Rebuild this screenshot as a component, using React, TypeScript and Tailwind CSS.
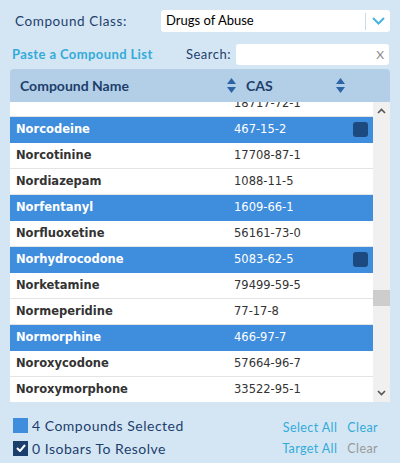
import React from 'react'

type Row = { name: string; cas: string; selected?: boolean; checked?: boolean }

const rows: Row[] = [
  { name: '', cas: '18717-72-1' },
  { name: 'Norcodeine', cas: '467-15-2', selected: true, checked: true },
  { name: 'Norcotinine', cas: '17708-87-1' },
  { name: 'Nordiazepam', cas: '1088-11-5' },
  { name: 'Norfentanyl', cas: '1609-66-1', selected: true },
  { name: 'Norfluoxetine', cas: '56161-73-0' },
  { name: 'Norhydrocodone', cas: '5083-62-5', selected: true, checked: true },
  { name: 'Norketamine', cas: '79499-59-5' },
  { name: 'Normeperidine', cas: '77-17-8' },
  { name: 'Normorphine', cas: '466-97-7', selected: true },
  { name: 'Noroxycodone', cas: '57664-96-7' },
  { name: 'Noroxymorphone', cas: '33522-95-1' },
]

function SortIcon() {
  return (
    <svg width="9" height="15" viewBox="0 0 9 15" className="shrink-0">
      <path d="M4.5 0 L9 6 L0 6 Z" fill="#2c63a6" />
      <path d="M0 9 L9 9 L4.5 15 Z" fill="#2c63a6" />
    </svg>
  )
}

export default function App() {
  return (
    <div className="w-[400px] h-[463px] bg-[#d4e6f4] overflow-hidden font-['Lato',sans-serif]">
      {/* Compound class */}
      <div className="flex items-center pt-[10px] pl-[15px] pr-[10px]">
        <div className="w-[146px] text-[13.5px] tracking-[0.6px] text-[#1f3f6c]">Compound Class:</div>
        <div className="flex items-center h-[22px] flex-1 bg-white rounded-[3px]">
          <div className="flex-1 pl-[5px] text-[13px] text-black">Drugs of Abuse</div>
          <div className="w-px h-[17px] bg-[#c9dbe9]"></div>
          <div className="w-[24px] flex justify-center">
            <svg width="13" height="8" viewBox="0 0 13 8">
              <path d="M1 1 L6.5 6.5 L12 1" fill="none" stroke="#47b4e0" strokeWidth="2" />
            </svg>
          </div>
        </div>
      </div>

      {/* Paste / search */}
      <div className="flex items-center mt-[12px] pl-[12px] pr-[11px]">
        <div className="text-[13px] font-bold tracking-[0.4px] text-[#33abd9]">Paste a Compound List</div>
        <div className="ml-auto text-[13px] tracking-[0.5px] text-[#1f3f6c] mr-[5px]">Search:</div>
        <div className="flex items-center justify-end h-[21px] w-[153px] bg-white rounded-[3px] pr-[5px] text-[12px] text-[#888]">X</div>
      </div>

      {/* Table */}
      <div className="mx-[10px] mt-[4px] w-[380px]">
        <div className="flex items-center h-[33px] bg-[#b3cfe7] rounded-t-[4px] pl-[10px]">
          <div className="w-[207px] text-[14px] font-bold text-[#1d3e6c]">Compound Name</div>
          <SortIcon />
          <div className="ml-[10px] w-[90px] text-[14px] font-bold text-[#1d3e6c]">CAS</div>
          <SortIcon />
        </div>
        <div className="flex h-[300px] bg-white">
          <div className="flex-1 overflow-hidden">
            <div className="-mt-[11px] font-['DejaVu_Sans',Verdana,sans-serif]">
              {rows.map((r, i) => (
                <div
                  key={i}
                  className={`flex items-center h-[26px] border-b ${r.selected ? 'bg-[#3f8ddd] border-[#3f8ddd] text-white' : 'bg-white border-[#e4e4e4] text-[#333]'}`}
                >
                  <div className="w-[224px] pl-[6px] text-[11.5px] font-bold">{r.name}</div>
                  <div className="flex-1 text-[11.5px]">{r.cas}</div>
                  {r.checked && <div className="w-[15px] h-[15px] rounded-[3px] bg-[#1c4a80] mr-[5px]"></div>}
                </div>
              ))}
            </div>
          </div>
          <div className="w-[17px] bg-[#f0f0f0] flex flex-col items-center">
            <svg width="9" height="6" viewBox="0 0 9 6" className="mt-[6px]">
              <path d="M1 5 L4.5 1.5 L8 5" fill="none" stroke="#555" strokeWidth="1.6" />
            </svg>
            <div className="mt-[176px] w-[17px] h-[16px] bg-[#cdcdcd]"></div>
            <svg width="9" height="6" viewBox="0 0 9 6" className="mt-auto mb-[6px]">
              <path d="M1 1 L4.5 4.5 L8 1" fill="none" stroke="#555" strokeWidth="1.6" />
            </svg>
          </div>
        </div>
      </div>

      {/* Footer */}
      <div className="flex flex-col gap-[7px] mt-[15px] pl-[13px] pr-[22px]">
        <div className="flex items-center h-[16px]">
          <div className="w-[15px] h-[15px] bg-[#3f8ddd]"></div>
          <div className="ml-[4px] text-[14px] tracking-[0.5px] text-[#1d3e6c]">4 Compounds Selected</div>
          <div className="ml-auto translate-y-[3px] text-[12.5px] tracking-[0.4px] text-[#33abd9]">Select All</div>
          <div className="ml-[10px] translate-y-[3px] text-[12.5px] tracking-[0.4px] text-[#33abd9]">Clear</div>
        </div>
        <div className="flex items-center h-[16px]">
          <div className="w-[15px] h-[15px] bg-[#1b3e6c] flex items-center justify-center">
            <svg width="10" height="8" viewBox="0 0 10 8">
              <path d="M1 4 L4 7 L9 1" fill="none" stroke="white" strokeWidth="2" />
            </svg>
          </div>
          <div className="ml-[4px] text-[14px] tracking-[0.5px] text-[#1d3e6c]">0 Isobars To Resolve</div>
          <div className="ml-auto translate-y-[1px] text-[12.5px] tracking-[0.4px] text-[#33abd9]">Target All</div>
          <div className="ml-[10px] translate-y-[1px] text-[12.5px] tracking-[0.4px] text-[#999]">Clear</div>
        </div>
      </div>
    </div>
  )
}
